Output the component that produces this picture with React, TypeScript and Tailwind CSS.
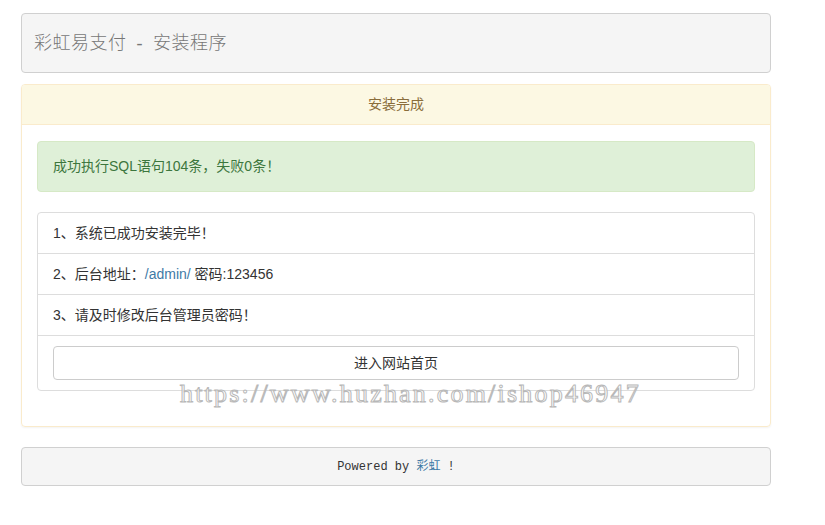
const App = () => {
    return (
        <div className="w-[825px] h-[525px] bg-white pt-[13px] font-['Liberation_Sans','Noto_Sans_CJK_SC',sans-serif] text-[14px] text-[#333]">
            <div className="ml-[21px] w-[750px]">
                <header className="h-[60px] flex items-center px-[12px] bg-[#f5f5f5] border border-[#d0d0d0] rounded-[4px]">
                    <h1 className="text-[18px] text-[#777] font-['Liberation_Serif','Noto_Sans_CJK_SC',serif] font-light tracking-[0.5px]">
                        彩虹易支付 &nbsp;-&nbsp; 安装程序
                    </h1>
                </header>

                <div className="relative mt-[11px] border border-[#faebcc] rounded-[4px] shadow-[0_1px_2px_rgba(0,0,0,0.05)]">
                    <div className="h-[40px] flex items-center justify-center bg-[#fcf8e3] border-b border-[#faebcc] text-[#8a6d3b] rounded-t-[3px]">
                        安装完成
                    </div>
                    <div className="px-[15px] pt-[16px] pb-[15px]">
                        <div className="h-[51px] flex items-center px-[15px] bg-[#dff0d8] border border-[#d6e9c6] rounded-[4px] text-[#3c763d]">
                            成功执行SQL语句104条，失败0条！
                        </div>
                        <ul className="mt-[20px] mb-[20px] border border-[#ddd] rounded-[4px]">
                            <li className="h-[41px] flex items-center px-[15px] border-b border-[#ddd]">1、系统已成功安装完毕！</li>
                            <li className="h-[41px] flex items-center px-[15px] border-b border-[#ddd]">
                                2、后台地址：<span className="text-[#3f7aa6]">/admin/</span>&nbsp;密码:123456
                            </li>
                            <li className="h-[41px] flex items-center px-[15px] border-b border-[#ddd]">3、请及时修改后台管理员密码！</li>
                            <li className="px-[15px] pt-[10px] pb-[10px]">
                                <button className="w-full h-[34px] bg-white border border-[#ccc] rounded-[4px] text-[#333] text-[14px]">
                                    进入网站首页
                                </button>
                            </li>
                        </ul>
                    </div>
                    <div className="absolute left-[158px] top-[296px] text-[26px] leading-none tracking-[2.2px] text-white/70 font-['Liberation_Serif',serif] [-webkit-text-stroke:1px_#b8b8b8] pointer-events-none whitespace-nowrap">
                        https://www.huzhan.com/ishop46947
                    </div>
                </div>

                <footer className="mt-[20px] h-[39px] flex items-center justify-center bg-[#f5f5f5] border border-[#d0d0d0] rounded-[4px] font-['Liberation_Mono','Noto_Sans_CJK_SC',monospace] text-[12px] text-[#333]">
                    Powered by&nbsp;<span className="text-[#3f7aa6]">彩虹</span>&nbsp;!
                </footer>
            </div>
        </div>
    )
}

export default App
